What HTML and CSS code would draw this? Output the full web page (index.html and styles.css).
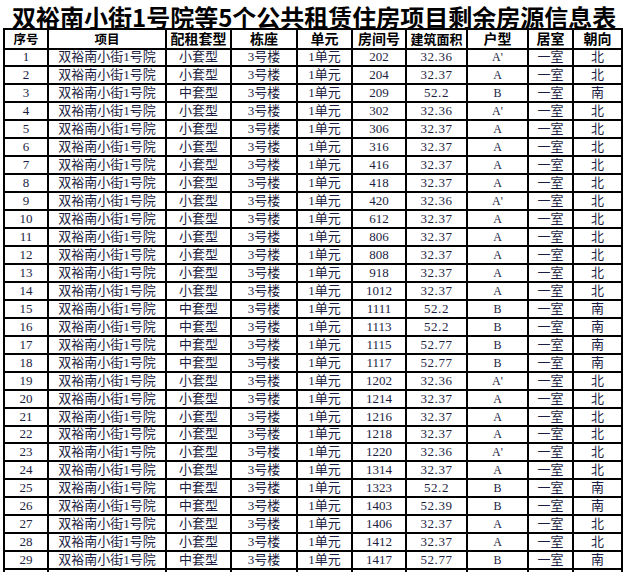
FILE: index.html
```html
<!DOCTYPE html>
<html lang="zh-CN">
<head>
<meta charset="utf-8">
<title>双裕南小街1号院等5个公共租赁住房项目剩余房源信息表</title>
<link rel="stylesheet" href="styles.css">
</head>
<body>
<div class="sheet">
<h1 class="title">双裕南小街1号院等5个公共租赁住房项目剩余房源信息表</h1>
<table class="grid">
<colgroup>
<col class="c-no"><col class="c-proj"><col class="c-type"><col class="c-bld"><col class="c-unit"><col class="c-room"><col class="c-area"><col class="c-hx"><col class="c-jus"><col class="c-dir">
</colgroup>
<thead>
<tr><th class="h-sm">序号</th><th class="h-sm">项目</th><th>配租套型</th><th>栋座</th><th>单元</th><th>房间号</th><th class="h-md">建筑面积</th><th>户型</th><th>居室</th><th>朝向</th></tr>
</thead>
<tbody>
<tr><td>1</td><td>双裕南小街1号院</td><td>小套型</td><td>3号楼</td><td>1单元</td><td>202</td><td class="num">32.36</td><td class="hx">A'</td><td>一室</td><td>北</td></tr>
<tr><td>2</td><td>双裕南小街1号院</td><td>小套型</td><td>3号楼</td><td>1单元</td><td>204</td><td class="num">32.37</td><td class="hx">A</td><td>一室</td><td>北</td></tr>
<tr><td>3</td><td>双裕南小街1号院</td><td>中套型</td><td>3号楼</td><td>1单元</td><td>209</td><td class="num">52.2</td><td class="hx">B</td><td>一室</td><td>南</td></tr>
<tr><td>4</td><td>双裕南小街1号院</td><td>小套型</td><td>3号楼</td><td>1单元</td><td>302</td><td class="num">32.36</td><td class="hx">A'</td><td>一室</td><td>北</td></tr>
<tr><td>5</td><td>双裕南小街1号院</td><td>小套型</td><td>3号楼</td><td>1单元</td><td>306</td><td class="num">32.37</td><td class="hx">A</td><td>一室</td><td>北</td></tr>
<tr><td>6</td><td>双裕南小街1号院</td><td>小套型</td><td>3号楼</td><td>1单元</td><td>316</td><td class="num">32.37</td><td class="hx">A</td><td>一室</td><td>北</td></tr>
<tr><td>7</td><td>双裕南小街1号院</td><td>小套型</td><td>3号楼</td><td>1单元</td><td>416</td><td class="num">32.37</td><td class="hx">A</td><td>一室</td><td>北</td></tr>
<tr><td>8</td><td>双裕南小街1号院</td><td>小套型</td><td>3号楼</td><td>1单元</td><td>418</td><td class="num">32.37</td><td class="hx">A</td><td>一室</td><td>北</td></tr>
<tr><td>9</td><td>双裕南小街1号院</td><td>小套型</td><td>3号楼</td><td>1单元</td><td>420</td><td class="num">32.36</td><td class="hx">A'</td><td>一室</td><td>北</td></tr>
<tr><td>10</td><td>双裕南小街1号院</td><td>小套型</td><td>3号楼</td><td>1单元</td><td>612</td><td class="num">32.37</td><td class="hx">A</td><td>一室</td><td>北</td></tr>
<tr><td>11</td><td>双裕南小街1号院</td><td>小套型</td><td>3号楼</td><td>1单元</td><td>806</td><td class="num">32.37</td><td class="hx">A</td><td>一室</td><td>北</td></tr>
<tr><td>12</td><td>双裕南小街1号院</td><td>小套型</td><td>3号楼</td><td>1单元</td><td>808</td><td class="num">32.37</td><td class="hx">A</td><td>一室</td><td>北</td></tr>
<tr><td>13</td><td>双裕南小街1号院</td><td>小套型</td><td>3号楼</td><td>1单元</td><td>918</td><td class="num">32.37</td><td class="hx">A</td><td>一室</td><td>北</td></tr>
<tr><td>14</td><td>双裕南小街1号院</td><td>小套型</td><td>3号楼</td><td>1单元</td><td>1012</td><td class="num">32.37</td><td class="hx">A</td><td>一室</td><td>北</td></tr>
<tr><td>15</td><td>双裕南小街1号院</td><td>中套型</td><td>3号楼</td><td>1单元</td><td>1111</td><td class="num">52.2</td><td class="hx">B</td><td>一室</td><td>南</td></tr>
<tr><td>16</td><td>双裕南小街1号院</td><td>中套型</td><td>3号楼</td><td>1单元</td><td>1113</td><td class="num">52.2</td><td class="hx">B</td><td>一室</td><td>南</td></tr>
<tr><td>17</td><td>双裕南小街1号院</td><td>中套型</td><td>3号楼</td><td>1单元</td><td>1115</td><td class="num">52.77</td><td class="hx">B</td><td>一室</td><td>南</td></tr>
<tr><td>18</td><td>双裕南小街1号院</td><td>中套型</td><td>3号楼</td><td>1单元</td><td>1117</td><td class="num">52.77</td><td class="hx">B</td><td>一室</td><td>南</td></tr>
<tr><td>19</td><td>双裕南小街1号院</td><td>小套型</td><td>3号楼</td><td>1单元</td><td>1202</td><td class="num">32.36</td><td class="hx">A'</td><td>一室</td><td>北</td></tr>
<tr><td>20</td><td>双裕南小街1号院</td><td>小套型</td><td>3号楼</td><td>1单元</td><td>1214</td><td class="num">32.37</td><td class="hx">A</td><td>一室</td><td>北</td></tr>
<tr><td>21</td><td>双裕南小街1号院</td><td>小套型</td><td>3号楼</td><td>1单元</td><td>1216</td><td class="num">32.37</td><td class="hx">A</td><td>一室</td><td>北</td></tr>
<tr><td>22</td><td>双裕南小街1号院</td><td>小套型</td><td>3号楼</td><td>1单元</td><td>1218</td><td class="num">32.37</td><td class="hx">A</td><td>一室</td><td>北</td></tr>
<tr><td>23</td><td>双裕南小街1号院</td><td>小套型</td><td>3号楼</td><td>1单元</td><td>1220</td><td class="num">32.36</td><td class="hx">A'</td><td>一室</td><td>北</td></tr>
<tr><td>24</td><td>双裕南小街1号院</td><td>小套型</td><td>3号楼</td><td>1单元</td><td>1314</td><td class="num">32.37</td><td class="hx">A</td><td>一室</td><td>北</td></tr>
<tr><td>25</td><td>双裕南小街1号院</td><td>中套型</td><td>3号楼</td><td>1单元</td><td>1323</td><td class="num">52.2</td><td class="hx">B</td><td>一室</td><td>南</td></tr>
<tr><td>26</td><td>双裕南小街1号院</td><td>中套型</td><td>3号楼</td><td>1单元</td><td>1403</td><td class="num">52.39</td><td class="hx">B</td><td>一室</td><td>南</td></tr>
<tr><td>27</td><td>双裕南小街1号院</td><td>小套型</td><td>3号楼</td><td>1单元</td><td>1406</td><td class="num">32.37</td><td class="hx">A</td><td>一室</td><td>北</td></tr>
<tr><td>28</td><td>双裕南小街1号院</td><td>小套型</td><td>3号楼</td><td>1单元</td><td>1412</td><td class="num">32.37</td><td class="hx">A</td><td>一室</td><td>北</td></tr>
<tr><td>29</td><td>双裕南小街1号院</td><td>中套型</td><td>3号楼</td><td>1单元</td><td>1417</td><td class="num">52.77</td><td class="hx">B</td><td>一室</td><td>南</td></tr>
<tr class="cut"><td></td><td></td><td></td><td></td><td></td><td></td><td></td><td></td><td></td><td></td></tr>
</tbody>
</table>
</div>
</body>
</html>
```

FILE: styles.css
```css
html, body {
  margin: 0;
  padding: 0;
  background: #ffffff;
}

body {
  height: 572px;
  overflow: hidden;
}

.sheet {
  padding: 5px 5px 0 3px;
}

.title {
  margin: 0;
  padding-left: 9px;
  font-family: "Noto Sans CJK SC", sans-serif;
  font-weight: 700;
  font-size: 24px;
  line-height: 23px;
  color: #000000;
  white-space: nowrap;
}

.grid {
  table-layout: fixed;
  border-collapse: collapse;
  width: 620px;
}

.c-no { width: 44px; }
.c-proj { width: 118px; }
.c-type { width: 65px; }
.c-bld { width: 66px; }
.c-unit { width: 55px; }
.c-room { width: 54px; }
.c-area { width: 61px; }
.c-hx { width: 61px; }
.c-jus { width: 45px; }
.c-dir { width: 49px; }

.grid th,
.grid td {
  border: 2px solid #000000;
  padding: 0;
  text-align: center;
  vertical-align: middle;
  white-space: nowrap;
  overflow: hidden;
}

.grid thead tr {
  height: 19.5px;
}

.grid th {
  font-family: "Noto Sans CJK SC", sans-serif;
  font-weight: 700;
  font-size: 14px;
  line-height: 15px;
  color: #000000;
}

.grid th.h-sm {
  font-size: 12.5px;
}

.grid th.h-md {
  font-size: 13px;
}

.grid tbody tr {
  height: 17.96px;
}

.grid td {
  font-family: "Liberation Serif", "Noto Sans CJK SC", serif;
  font-weight: 400;
  font-size: 13px;
  line-height: 14px;
  color: #1c1d42;
}

.grid td.num {
  letter-spacing: 0.6px;
}

.grid td.hx {
  font-size: 12px;
}
```
